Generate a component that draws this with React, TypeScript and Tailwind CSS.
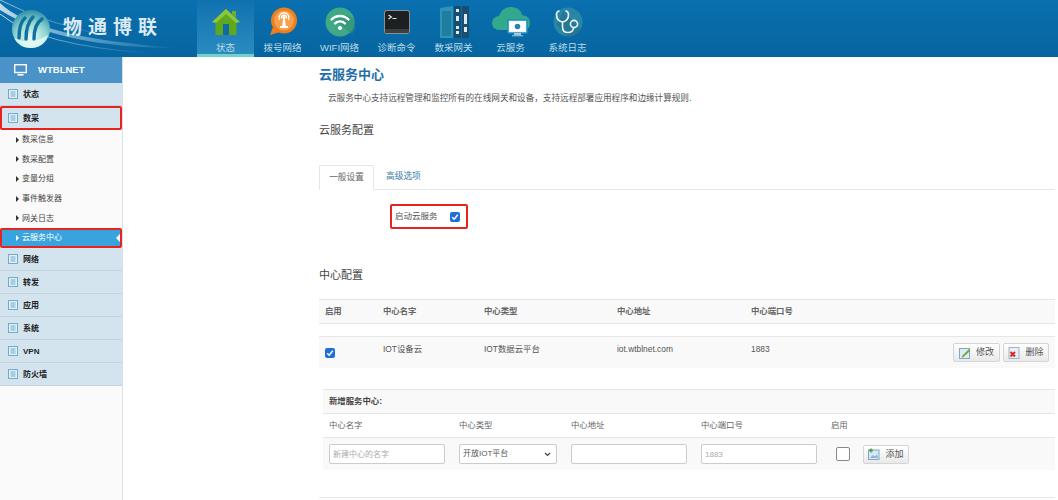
import { ReactNode } from "react";

const HomeIcon = () => (
  <svg width="30" height="30" viewBox="0 0 30 30">
    <path d="M15 2 L29 15 L25.5 15 L25.5 27 Q25.5 28 24 28 L6 28 Q4.5 28 4.5 27 L4.5 15 L1 15 Z" fill="#5fa81e" />
    <path d="M15 2 L29 15 L25 16 L15 7 L5 16 L1 15 Z" fill="#8cc63f" />
    <rect x="12" y="17" width="6" height="11" fill="#0d6aa5" />
    <path d="M21 4 h4 v7 l-4 -4 z" fill="#6bb12a" />
  </svg>
);

const DialIcon = () => (
  <svg width="30" height="30" viewBox="0 0 30 30">
    <circle cx="16" cy="13.5" r="13" fill="#ee7f1c" />
    <path d="M5 20 L2 28 L12 25 Z" fill="#ee7f1c" />
    <circle cx="16" cy="13.5" r="10" fill="#f6a04d" />
    <g fill="none" stroke="#fff" strokeWidth="1.4">
      <path d="M11.5 13 a5 5 0 1 1 9 0" />
      <path d="M13.5 11.5 a2.6 2.6 0 1 1 5 0" />
    </g>
    <circle cx="16" cy="10.5" r="1.5" fill="#fff" />
    <path d="M15.2 11 h1.6 l1 8 h-3.6 z M12 19 h8 v2 h-8 z" fill="#fff" />
  </svg>
);

const WifiIcon = () => (
  <svg width="30" height="30" viewBox="0 0 30 30">
    <circle cx="15" cy="15" r="14.5" fill="#3fa885" />
    <path d="M9 12 L27 27 A14.5 14.5 0 0 0 29 12 L22 8 Z" fill="#2f8f73" opacity="0.6" />
    <g fill="none" stroke="#fff" strokeWidth="2.4" strokeLinecap="round">
      <path d="M6.5 12.5 a12 12 0 0 1 17 0" />
      <path d="M10 16.5 a7 7 0 0 1 10 0" />
    </g>
    <circle cx="15" cy="21" r="2" fill="#fff" />
  </svg>
);

const TerminalIcon = () => (
  <svg width="30" height="30" viewBox="0 0 30 30">
    <rect x="2" y="3" width="26" height="24" rx="3" fill="#8a8f90" />
    <rect x="3" y="4" width="24" height="22" rx="2" fill="#1d2022" />
    <rect x="3" y="22" width="24" height="4" fill="#3c3f40" />
    <path d="M6.5 8 L9.5 10 L6.5 12" fill="none" stroke="#e8e8e8" strokeWidth="1.1" />
    <rect x="10.5" y="11" width="4" height="1" fill="#e8e8e8" />
  </svg>
);

const GatewayIcon = () => (
  <svg width="30" height="34" viewBox="0 0 30 34">
    <path d="M1 3 L14 1 L14 33 L1 33 Z" fill="#2e93b5" />
    <rect x="3" y="6" width="9" height="25" fill="#1f7ea0" />
    <rect x="15" y="1" width="7" height="32" fill="#1a4e6e" />
    <rect x="23" y="1" width="7" height="32" fill="#1a4e6e" />
    <g fill="#dfeaf0">
      <rect x="17" y="4" width="3" height="3" />
      <rect x="17" y="11" width="3" height="5" />
      <rect x="17" y="21" width="3" height="3" />
      <rect x="17" y="26" width="3" height="3" />
      <rect x="25" y="9" width="3" height="10" />
      <rect x="25" y="22" width="3" height="5" />
    </g>
  </svg>
);

const CloudIcon = () => (
  <svg width="38" height="32" viewBox="0 0 38 32">
    <path d="M8 24 Q0 24 0 17 Q0 11 7 10 Q10 1 19 1 Q28 1 30 9 Q38 10 38 17 Q38 24 31 24 Z" fill="#33a98c" />
    <rect x="16" y="14" width="19" height="13" fill="#eaf6fb" stroke="#1f8ac0" strokeWidth="1.5" />
    <rect x="18" y="16" width="15" height="9" fill="#ffffff" />
    <circle cx="25.5" cy="20.5" r="2.8" fill="#2c7fb0" />
    <rect x="22" y="27" width="7" height="2" fill="#a9c9d6" />
    <rect x="20" y="29" width="11" height="1.4" fill="#7fb2c6" />
  </svg>
);

const StethoIcon = () => (
  <svg width="30" height="30" viewBox="0 0 30 30">
    <circle cx="15" cy="15" r="14.5" fill="#2a86a5" />
    <path d="M10 4 L28 22 A14.5 14.5 0 0 1 15 29.5 L4 18 Z" fill="#256f8e" opacity="0.7" />
    <g fill="none" stroke="#eef5f8" strokeWidth="1.6" strokeLinecap="round">
      <path d="M6 4 Q3.5 4.5 3.5 7.5 Q3.5 14 9.5 15 Q15.5 14 15.5 7.5 Q15.5 4.5 13 4" />
      <path d="M9.5 15 L9.5 20 Q9.5 25.5 15 25.5 Q20 25.5 20.5 21" />
      <circle cx="21" cy="17" r="3.6" />
    </g>
  </svg>
);

const Logo = () => (
  <svg width="40" height="40" viewBox="0 0 40 40" className="relative shrink-0">
    <defs>
      <radialGradient id="orb" cx="0.5" cy="0.75" r="0.75">
        <stop offset="0" stopColor="#eafcf8" />
        <stop offset="0.55" stopColor="#8fd6d2" />
        <stop offset="1" stopColor="#2e8fa6" />
      </radialGradient>
    </defs>
    <circle cx="20" cy="20" r="19" fill="url(#orb)" />
    <g fill="none" stroke="#12719f" strokeWidth="3.4" strokeLinecap="round">
      <path d="M8 29 Q8 14 14 9" />
      <path d="M15 30 Q15 15 22 8" />
      <path d="M23 30 Q23 15 31 10" />
    </g>
    <path d="M3 29 Q20 37 37 26 Q32 39 20 39 Q8 39 3 29 Z" fill="#e4faf4" opacity="0.85" />
  </svg>
);

// light streaks that run behind the logo
const HeaderStreaks = () => (
  <svg width="197" height="57" viewBox="0 0 197 57" className="absolute left-0 top-0">
    <defs>
      <linearGradient id="fade" x1="0" x2="1">
        <stop offset="0" stopColor="#ffffff" stopOpacity="0.75" />
        <stop offset="0.35" stopColor="#bfe4f2" stopOpacity="0.55" />
        <stop offset="1" stopColor="#bfe4f2" stopOpacity="0" />
      </linearGradient>
    </defs>
    <path d="M0 3 Q35 38 180 48 Q60 48 0 10 Z" fill="url(#fade)" />
    <path d="M0 14 Q40 46 150 53" fill="none" stroke="url(#fade)" strokeWidth="1" />
    <path d="M0 0 Q50 26 120 38" fill="none" stroke="url(#fade)" strokeWidth="0.8" />
  </svg>
);

const navItems: { label: string; icon: ReactNode; active?: boolean }[] = [
  { label: "状态", icon: <HomeIcon />, active: true },
  { label: "拨号网络", icon: <DialIcon /> },
  { label: "WIFI网络", icon: <WifiIcon /> },
  { label: "诊断命令", icon: <TerminalIcon /> },
  { label: "数采网关", icon: <GatewayIcon /> },
  { label: "云服务", icon: <CloudIcon /> },
  { label: "系统日志", icon: <StethoIcon /> },
];

const ListIcon = () => (
  <svg width="10" height="10" viewBox="0 0 10 10" className="shrink-0">
    <rect x="0.5" y="0.5" width="9" height="9" fill="#e4f0f7" stroke="#6eaccd" />
    <path d="M2.5 3 h5 M2.5 5 h5 M2.5 7 h5" stroke="#6eaccd" strokeWidth="1" />
  </svg>
);

const SideItem = ({ label, boxed }: { label: string; boxed?: boolean }) => (
  <div
    className={`flex items-center gap-[5px] bg-[#d4e4ef] text-[8px] font-bold text-[#222] ${
      boxed
        ? "h-[24px] rounded-[2px] border-2 border-[#e8221f] pl-[6px]"
        : "h-[23px] border-b border-[#c3d4e0] pl-[8px]"
    }`}
  >
    <ListIcon />
    <span className="pt-[2px]">{label}</span>
  </div>
);

const SubItem = ({ label }: { label: string }) => (
  <div className="flex h-[19.6px] items-center gap-[3px] pl-[16px] text-[8px] text-[#444]">
    <span className="h-0 w-0 border-y-[3px] border-l-[3px] border-y-transparent border-l-[#333]" />
    <span className="pt-px">{label}</span>
  </div>
);

const CheckBox = () => (
  <span className="flex h-[10px] w-[10px] items-center justify-center rounded-[2px] bg-[#1f6fd8]">
    <svg width="8" height="8" viewBox="0 0 8 8">
      <path d="M1.2 4.2 L3.2 6.2 L6.8 1.8" fill="none" stroke="#fff" strokeWidth="1.5" />
    </svg>
  </span>
);

const EditIcon = () => (
  <svg width="12" height="12" viewBox="0 0 12 12">
    <rect x="0.5" y="1.5" width="10" height="10" fill="#dcebf5" stroke="#7fa9c6" />
    <path d="M3 9 L10 2 L11.5 3.5 L4.5 10 L2.5 10.5 Z" fill="#7da13c" />
  </svg>
);

const DeleteIcon = () => (
  <svg width="12" height="12" viewBox="0 0 12 12">
    <rect x="1" y="0.5" width="10" height="11" fill="#e6eef6" stroke="#9fb6cc" />
    <path d="M2.5 5 L7 9.5 M7 5 L2.5 9.5" stroke="#d8261c" strokeWidth="1.8" />
  </svg>
);

const AddIcon = () => (
  <svg width="12" height="12" viewBox="0 0 12 12">
    <rect x="0.5" y="2" width="10.5" height="9.5" fill="#d5e8f4" stroke="#7fa9c6" />
    <path d="M3 0.5 v4 M1 2.5 h4" stroke="#4ea13c" strokeWidth="1.5" />
    <path d="M2 10 L5 7 L7 8.5 L9 6.5 L10 10 Z" fill="#8fb7d0" />
  </svg>
);

const ActionButton = ({ icon, label, className }: { icon: ReactNode; label: string; className: string }) => (
  <button
    className={`flex h-[19px] items-center justify-center gap-[5px] rounded-[2px] border border-[#d5d5d5] bg-gradient-to-b from-white to-[#e9e9e9] text-[9px] text-[#555] ${className}`}
  >
    {icon}
    <span className="pt-px">{label}</span>
  </button>
);

const fieldClass =
  "h-[20px] rounded-[2px] border border-[#ccc] bg-white px-[3px] text-[8px] text-[#555] placeholder:text-[#aaa]";

export default function App() {
  return (
    <div
      className="flex h-[500px] w-[1058px] flex-col overflow-hidden bg-white"
      style={{ fontFamily: '"Liberation Sans", "Noto Sans CJK SC", sans-serif' }}
    >
      <header className="relative flex h-[57px] shrink-0 overflow-hidden bg-gradient-to-b from-[#0a70b0] to-[#06659f]">
        <HeaderStreaks />
        <div className="relative flex w-[197px] items-center gap-[12px] pl-[11px]">
          <Logo />
          <span className="whitespace-nowrap text-[19px] font-bold tracking-[6px] text-[#dcebf3]">物通博联</span>
        </div>
        {navItems.map((n) => (
          <div
            key={n.label}
            className={`flex w-[57px] flex-col items-center ${
              n.active ? "border-b-[3px] border-[#6fd3cc] bg-gradient-to-b from-[#0f72b0] to-[#2a8bbf]" : ""
            }`}
          >
            <div className="flex h-[41px] items-center justify-center pt-[3px]">{n.icon}</div>
            <span className="whitespace-nowrap text-[9.5px] leading-[13px] text-[#bcdbe8]">{n.label}</span>
          </div>
        ))}
      </header>

      <div className="flex min-h-0 flex-1">
        <aside className="w-[123px] shrink-0 border-r border-[#d7e1e8] bg-[#fafafa]">
          <div className="flex h-[26px] items-center gap-[11px] bg-[#4a93c8] pl-[14px] text-[9.5px] font-bold text-white">
            <svg width="13" height="12" viewBox="0 0 13 12">
              <rect x="0.7" y="0.7" width="11.6" height="7.8" fill="none" stroke="#fff" strokeWidth="1.4" />
              <path d="M3.5 10.8 h6" stroke="#fff" strokeWidth="1.6" />
            </svg>
            <span>WTBLNET</span>
          </div>
          <SideItem label="状态" />
          <SideItem label="数采" boxed />
          <SubItem label="数采信息" />
          <SubItem label="数采配置" />
          <SubItem label="变量分组" />
          <SubItem label="事件触发器" />
          <SubItem label="网关日志" />
          <div className="relative flex h-[20px] items-center gap-[3px] rounded-[2px] border-2 border-[#e8221f] bg-[#38a3dc] pl-[14px] text-[8px] text-white">
            <span className="h-0 w-0 border-y-[3px] border-l-[3px] border-y-transparent border-l-white" />
            <span>云服务中心</span>
            <span className="absolute right-0 h-0 w-0 border-y-[4px] border-r-[4px] border-y-transparent border-r-white" />
          </div>
          <SideItem label="网络" />
          <SideItem label="转发" />
          <SideItem label="应用" />
          <SideItem label="系统" />
          <SideItem label="VPN" />
          <SideItem label="防火墙" />
        </aside>

        <main className="min-w-0 flex-1 pl-[196px] pr-[3px]">
          <h1 className="mt-[10px] text-[13px] font-bold leading-[16px] text-[#1f6ea8]">云服务中心</h1>
          <p className="mt-[8px] pl-[9px] text-[8.6px] leading-[14px] text-[#555]">
            云服务中心支持远程管理和监控所有的在线网关和设备，支持远程部署应用程序和边缘计算规则.
          </p>
          <h2 className="mt-[17px] text-[11px] leading-[16px] text-[#444]">云服务配置</h2>

          <div className="mt-[27px] flex h-[25px] border-b border-[#e6e6e6] text-[8.7px]">
            <div className="-mb-px flex h-[25px] w-[55px] items-center justify-center rounded-t-[2px] border border-b-white border-[#e6e6e6] bg-white text-[#666]">
              一般设置
            </div>
            <div className="flex items-center pl-[12px] text-[#3a7ca8]">高级选项</div>
          </div>

          <div className="ml-[71px] mt-[14px] flex h-[25px] w-[78px] items-center rounded-[2px] border-2 border-[#e8221f] pl-[3px] text-[8.5px] text-[#555]">
            <span>启动云服务</span>
            <span className="ml-[12px]">
              <CheckBox />
            </span>
          </div>

          <h2 className="mt-[38px] text-[11px] leading-[16px] text-[#444]">中心配置</h2>

          <div className="mt-[16px] grid h-[25px] grid-cols-[58px_101px_133px_134px_1fr] items-center border-y border-[#e6e6e6] bg-[#f9f9f9] px-[6px] text-[8.4px] font-bold text-[#666]">
            <span>启用</span>
            <span>中心名字</span>
            <span>中心类型</span>
            <span>中心地址</span>
            <span>中心端口号</span>
          </div>
          <div className="mt-[12px] grid h-[32px] grid-cols-[58px_101px_133px_134px_1fr] items-center border-t border-[#e6e6e6] bg-[#f9f9f9] px-[6px] text-[8.4px] text-[#555]">
            <CheckBox />
            <span className="pb-[6px]">IOT设备云</span>
            <span className="pb-[6px]">IOT数据云平台</span>
            <span className="pb-[6px]">iot.wtblnet.com</span>
            <div className="flex items-center justify-between">
              <span className="pb-[6px]">1883</span>
              <div className="flex gap-[3px]">
                <ActionButton icon={<EditIcon />} label="修改" className="w-[47px]" />
                <ActionButton icon={<DeleteIcon />} label="删除" className="w-[46px]" />
              </div>
            </div>
          </div>

          <div className="ml-[4px] mt-[21px] flex h-[24px] items-center border-t border-[#e6e6e6] bg-[#f9f9f9] pl-[6px] text-[8.4px] font-bold text-[#444]">
            新增服务中心:
          </div>
          <div className="ml-[4px] grid h-[25px] grid-cols-[130px_112px_130px_130px_1fr] items-center border-y border-[#e6e6e6] pl-[6px] text-[8.4px] text-[#666]">
            <span>中心名字</span>
            <span>中心类型</span>
            <span>中心地址</span>
            <span>中心端口号</span>
            <span>启用</span>
          </div>
          <div className="ml-[4px] grid h-[32px] grid-cols-[130px_112px_130px_130px_1fr] items-center bg-[#f9f9f9] pl-[6px]">
            <input className={`${fieldClass} w-[116px]`} placeholder="新建中心的名字" readOnly />
            <div className={`${fieldClass} flex w-[98px] items-center justify-between`}>
              <span>开放IOT平台</span>
              <svg width="7" height="5" viewBox="0 0 7 5" className="mr-[2px]">
                <path d="M1 1 L3.5 3.5 L6 1" fill="none" stroke="#444" strokeWidth="1.2" />
              </svg>
            </div>
            <input className={`${fieldClass} w-[116px]`} readOnly />
            <input className={`${fieldClass} w-[116px]`} placeholder="1883" readOnly />
            <div className="flex items-center">
              <span className="ml-[5px] h-[14px] w-[14px] rounded-[2px] border border-[#888] bg-white" />
              <ActionButton icon={<AddIcon />} label="添加" className="ml-[13px] w-[46px]" />
            </div>
          </div>
          <div className="mt-[27px] border-t border-[#e6e6e6]" />
        </main>
      </div>
    </div>
  );
}
